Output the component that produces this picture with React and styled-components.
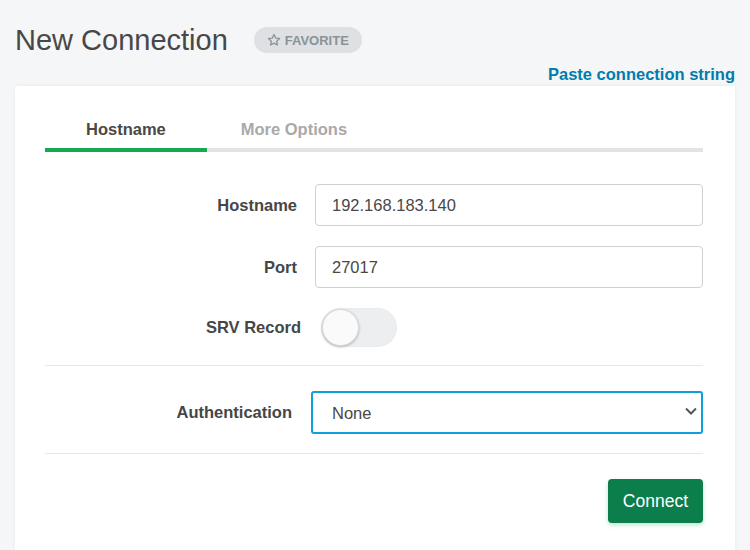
import React from 'react'
import styled, { createGlobalStyle } from 'styled-components'

const Global = createGlobalStyle`
html, body {
  margin: 0;
  padding: 0;
  background: #f5f6f7;
  font-family: "Liberation Sans", Arial, sans-serif;
  color: #494747;
  overflow: hidden;
}
* { box-sizing: border-box; }
`

const Page = styled.div`
height: 100vh;
display: flex;
flex-direction: column;
padding: 24px 15px 0 15px;
`

const Header = styled.div`
display: flex;
align-items: center;
`

const Title = styled.h1`
margin: 0;
font-size: 29px;
line-height: 32px;
font-weight: normal;
color: #494747;
`

const FavPill = styled.button`
margin-left: 26px;
height: 26px;
padding: 0 13px 0 13px;
border: none;
border-radius: 13px;
background: #dee0e3;
color: #8a9396;
font-family: inherit;
font-size: 13px;
font-weight: bold;
display: flex;
align-items: center;
gap: 4px;
`

const PasteLink = styled.a`
align-self: flex-end;
margin-top: 8px;
line-height: 20px;
font-size: 16.5px;
font-weight: bold;
color: #007cad;
text-decoration: none;
`

const Card = styled.div`
flex: 1;
margin-top: 2px;
background: #fff;
box-shadow: 0 0 4px rgba(0,0,0,0.06);
padding: 24px 32px 0 30px;
display: flex;
flex-direction: column;
`

const TabBar = styled.div`
display: flex;
border-bottom: 4px solid #e3e3e3;
`

const Tab = styled.div`
line-height: 38px;
padding: 0 ${p => p.$pad}px;
margin-bottom: -4px;
border-bottom: 4px solid ${p => (p.$active ? '#13aa52' : 'transparent')};
font-size: 16.5px;
font-weight: bold;
color: ${p => (p.$active ? '#494747' : '#a9a9a9')};
`

const Form = styled.div`
margin-top: 32px;
display: flex;
flex-direction: column;
gap: 20px;
`

const Row = styled.div`
display: grid;
grid-template-columns: ${p => p.$label}px 1fr;
column-gap: ${p => p.$gap}px;
align-items: center;
`

const Label = styled.label`
text-align: right;
font-size: 16.5px;
font-weight: bold;
color: #464646;
`

const Input = styled.input`
height: 42px;
width: 100%;
border: 1px solid #d0d0d0;
border-radius: 4px;
padding: 0 16px;
font-family: inherit;
font-size: 16.5px;
color: #494747;
outline: none;
`

const Toggle = styled.div`
width: 76px;
height: 39px;
border-radius: 20px;
background: #eceeef;
box-shadow: inset 0 0 2px rgba(0,0,0,0.05);
padding: 1px;
display: flex;
align-items: center;
`

const Knob = styled.div`
width: 37px;
height: 37px;
border-radius: 50%;
background: #fafafa;
border: 1px solid #d9d9d9;
box-shadow: 0 1px 3px rgba(0,0,0,0.25);
`

const Divider = styled.hr`
margin: 0;
border: none;
border-top: 1px solid #e8e8e8;
`

const Section = styled.div`
padding: ${p => p.$pad};
`

const SelectWrap = styled.div`
position: relative;
`

const Select = styled.select`
appearance: none;
width: 100%;
height: 43px;
border: 2px solid #0f9fdc;
border-radius: 3px;
padding: 0 19px;
font-family: inherit;
font-size: 16.5px;
color: #494747;
background: #fff;
outline: none;
`

const Chevron = styled.svg`
position: absolute;
right: 6px;
top: 16px;
pointer-events: none;
`

const Footer = styled.div`
display: flex;
justify-content: flex-end;
padding-top: 25px;
`

const ConnectBtn = styled.button`
height: 44px;
padding: 0 15px;
border: none;
border-radius: 4px;
background: #0c7e4c;
color: #fff;
font-family: inherit;
font-size: 17.5px;
box-shadow: 0 2px 4px rgba(19, 170, 82, 0.3);
`

const Star = () => (
  <svg width="14" height="14" viewBox="0 0 24 24" fill="none" stroke="#8a9396" strokeWidth="2.2" strokeLinejoin="round">
    <path d="M12 2.5l2.9 6.1 6.6.8-4.9 4.6 1.3 6.6L12 17.3l-5.9 3.3 1.3-6.6-4.9-4.6 6.6-.8z" />
  </svg>
)

const App = () => {
  return (
    <>
      <Global />
      <Page>
        <Header>
          <Title>New Connection</Title>
          <FavPill>
            <Star />
            FAVORITE
          </FavPill>
        </Header>
        <PasteLink href="#">Paste connection string</PasteLink>
        <Card>
          <TabBar>
            <Tab $active $pad={41}>Hostname</Tab>
            <Tab $pad={34}>More Options</Tab>
          </TabBar>
          <Form>
            <Row $label={252} $gap={18}>
              <Label>Hostname</Label>
              <Input defaultValue="192.168.183.140" />
            </Row>
            <Row $label={252} $gap={18}>
              <Label>Port</Label>
              <Input defaultValue="27017" />
            </Row>
            <Row $label={256} $gap={20}>
              <Label>SRV Record</Label>
              <Toggle>
                <Knob />
              </Toggle>
            </Row>
          </Form>
          <Section $pad="18px 0 0 0">
            <Divider />
          </Section>
          <Section $pad="25px 0 19px 0">
            <Row $label={247} $gap={19}>
              <Label>Authentication</Label>
              <SelectWrap>
                <Select defaultValue="none">
                  <option value="none">None</option>
                </Select>
                <Chevron width="12" height="8" viewBox="0 0 12 8" fill="none" stroke="#555" strokeWidth="2">
                  <path d="M1 1.5l5 5 5-5" />
                </Chevron>
              </SelectWrap>
            </Row>
          </Section>
          <Divider />
          <Footer>
            <ConnectBtn>Connect</ConnectBtn>
          </Footer>
        </Card>
      </Page>
    </>
  )
}

export default App
